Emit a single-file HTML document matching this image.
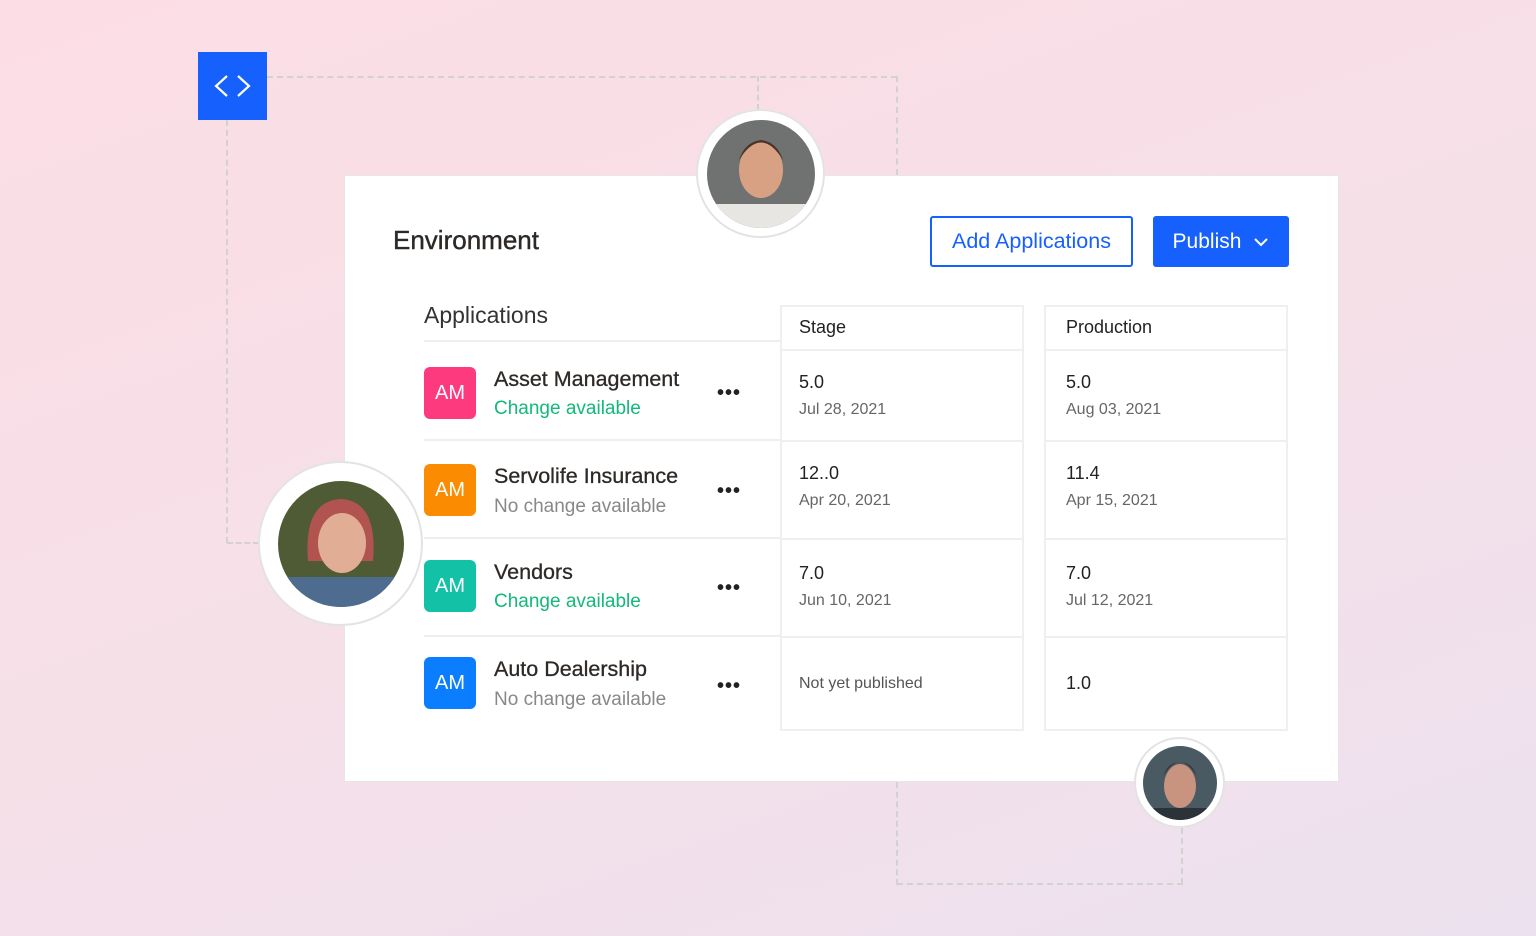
<!DOCTYPE html>
<html><head><meta charset="utf-8"><style>
*{margin:0;padding:0;box-sizing:border-box}
body{width:1536px;height:936px;overflow:hidden;position:relative;font-family:"Liberation Sans",sans-serif;background:linear-gradient(160deg,#fcdde5 0%,#f6e0e8 50%,#ece1ef 100%)}
.a{position:absolute}
.dh{position:absolute;height:0;border-top:2px dashed #d2d2d2}
.dv{position:absolute;width:0;border-left:2px dashed #d2d2d2}
.card{position:absolute;left:344px;top:175px;width:995px;height:607px;background:#fff;border:1px solid #e6e6e6}
.t{position:absolute;white-space:nowrap}
.ic{position:absolute;left:424px;width:52px;height:52px;border-radius:6px;color:#fff;font-size:20px;display:flex;align-items:center;justify-content:center}
.nm{position:absolute;left:494px;font-size:21.5px;color:#2d2926;-webkit-text-stroke:0.3px #2d2926}
.st{position:absolute;left:494px;font-size:19px}
.g{color:#12b97a}.n{color:#888}
.dots{position:absolute;left:717px;font-size:20px;font-weight:bold;letter-spacing:1px;color:#222}
.box{position:absolute;top:305px;height:426px;border:2px solid #efefef}
.hl{position:absolute;left:0;right:0;height:2px;background:#efefef}
.v{position:absolute;font-size:18px;color:#222}
.d{position:absolute;font-size:16px;color:#666}
.av{position:absolute;border-radius:50%;background:#fff;border:2px solid #e3e3e3;display:flex;align-items:center;justify-content:center}
</style></head><body>
<div class="dh" style="left:267px;top:76px;width:630px"></div>
<div class="dv" style="left:896px;top:76px;height:99px"></div>
<div class="dv" style="left:757px;top:76px;height:34px"></div>
<div class="dv" style="left:226px;top:120px;height:423px"></div>
<div class="dh" style="left:227px;top:542px;width:32px"></div>
<div class="dv" style="left:896px;top:782px;height:103px"></div>
<div class="dh" style="left:897px;top:883px;width:286px"></div>
<div class="dv" style="left:1181px;top:828px;height:56px"></div>

<div class="a" style="left:198px;top:52px;width:69px;height:68px;background:#1660fe">
<svg width="69" height="68" viewBox="0 0 69 68"><path d="M29 24 L18 34 L29 44 M40 24 L51 34 L40 44" stroke="#fff" stroke-width="2.2" fill="none"/></svg></div>

<div class="card"></div>
<div class="t" style="left:393px;top:225px;font-size:26px;color:#2d2926;-webkit-text-stroke:0.4px #2d2926">Environment</div>
<div class="a" style="left:930px;top:216px;width:203px;height:51px;border:2px solid #1660fe;border-radius:3px;color:#1660fe;font-size:21.5px;display:flex;align-items:center;justify-content:center">Add Applications</div>
<div class="a" style="left:1153px;top:216px;width:136px;height:51px;background:#1660fe;border-radius:3px;color:#fff;font-size:21px;display:flex;align-items:center;justify-content:center;gap:12px">Publish <svg width="16" height="10"><path d="M2 2 L8 8 L14 2" stroke="#fff" stroke-width="2" fill="none"/></svg></div>

<div class="t" style="left:424px;top:302px;font-size:23px;color:#333">Applications</div>
<div class="a" style="left:424px;top:340px;width:357px;height:2px;background:#eee"></div>
<div class="a" style="left:424px;top:439px;width:357px;height:2px;background:#eee"></div>
<div class="a" style="left:424px;top:537px;width:357px;height:2px;background:#eee"></div>
<div class="a" style="left:424px;top:635px;width:357px;height:2px;background:#eee"></div>

<div class="ic" style="top:367px;background:#fd3a7d">AM</div>
<div class="t nm" style="top:367px">Asset Management</div>
<div class="t st g" style="top:398px">Change available</div>
<div class="t dots" style="top:382px">•••</div>
<div class="ic" style="top:464px;background:#fb8b00">AM</div>
<div class="t nm" style="top:464px">Servolife Insurance</div>
<div class="t st n" style="top:496px">No change available</div>
<div class="t dots" style="top:480px">•••</div>
<div class="ic" style="top:560px;background:#13c2a6">AM</div>
<div class="t nm" style="top:560px">Vendors</div>
<div class="t st g" style="top:591px">Change available</div>
<div class="t dots" style="top:577px">•••</div>
<div class="ic" style="top:657px;background:#0b7dff">AM</div>
<div class="t nm" style="top:657px">Auto Dealership</div>
<div class="t st n" style="top:689px">No change available</div>
<div class="t dots" style="top:675px">•••</div>

<div class="box" style="left:780px;width:244px">
<div class="hl" style="top:42px"></div><div class="hl" style="top:133px"></div><div class="hl" style="top:231px"></div><div class="hl" style="top:329px"></div>
</div>
<div class="box" style="left:1044px;width:244px">
<div class="hl" style="top:42px"></div><div class="hl" style="top:133px"></div><div class="hl" style="top:231px"></div><div class="hl" style="top:329px"></div>
</div>
<div class="t v" style="left:799px;top:317px">Stage</div>
<div class="t v" style="left:1066px;top:317px">Production</div>
<div class="t v" style="left:799px;top:372px">5.0</div><div class="t d" style="left:799px;top:401px">Jul 28, 2021</div>
<div class="t v" style="left:1066px;top:372px">5.0</div><div class="t d" style="left:1066px;top:401px">Aug 03, 2021</div>
<div class="t v" style="left:799px;top:463px">12..0</div><div class="t d" style="left:799px;top:492px">Apr 20, 2021</div>
<div class="t v" style="left:1066px;top:463px">11.4</div><div class="t d" style="left:1066px;top:492px">Apr 15, 2021</div>
<div class="t v" style="left:799px;top:563px">7.0</div><div class="t d" style="left:799px;top:592px">Jun 10, 2021</div>
<div class="t v" style="left:1066px;top:563px">7.0</div><div class="t d" style="left:1066px;top:592px">Jul 12, 2021</div>
<div class="t d" style="left:799px;top:675px;color:#555">Not yet published</div>
<div class="t v" style="left:1066px;top:673px">1.0</div>

<div class="av" style="left:696px;top:109px;width:129px;height:129px">
<svg width="108" height="108" viewBox="0 0 108 108"><defs><clipPath id="c1"><circle cx="54" cy="54" r="54"/></clipPath></defs><g clip-path="url(#c1)"><rect width="108" height="108" fill="#6f7270"/><rect y="84" width="108" height="30" fill="#e8e6e3"/><ellipse cx="54" cy="50" rx="22" ry="28" fill="#d9a184"/><path d="M32 40 Q54 5 76 40 Q70 22 54 20 Q38 22 32 40Z" fill="#4a3326"/></g></svg></div>
<div class="av" style="left:258px;top:461px;width:165px;height:165px">
<svg width="126" height="126" viewBox="0 0 126 126"><defs><clipPath id="c2"><circle cx="63" cy="63" r="63"/></clipPath></defs><g clip-path="url(#c2)"><rect width="126" height="126" fill="#4f5b35"/><rect y="96" width="126" height="40" fill="#4d6c8f"/><path d="M30 80 Q25 20 63 18 Q100 20 95 80 Z" fill="#b1534f"/><ellipse cx="64" cy="62" rx="24" ry="30" fill="#e2ad95"/></g></svg></div>
<div class="av" style="left:1134px;top:737px;width:91px;height:91px">
<svg width="74" height="74" viewBox="0 0 74 74"><defs><clipPath id="c3"><circle cx="37" cy="37" r="37"/></clipPath></defs><g clip-path="url(#c3)"><rect width="74" height="74" fill="#4a5a62"/><ellipse cx="37" cy="40" rx="16" ry="22" fill="#c89480"/><path d="M20 30 Q37 2 54 30 Q48 16 37 16 Q26 16 20 30Z" fill="#2d2622"/><rect y="62" width="74" height="14" fill="#2c3338"/></g></svg></div>
</body></html>
